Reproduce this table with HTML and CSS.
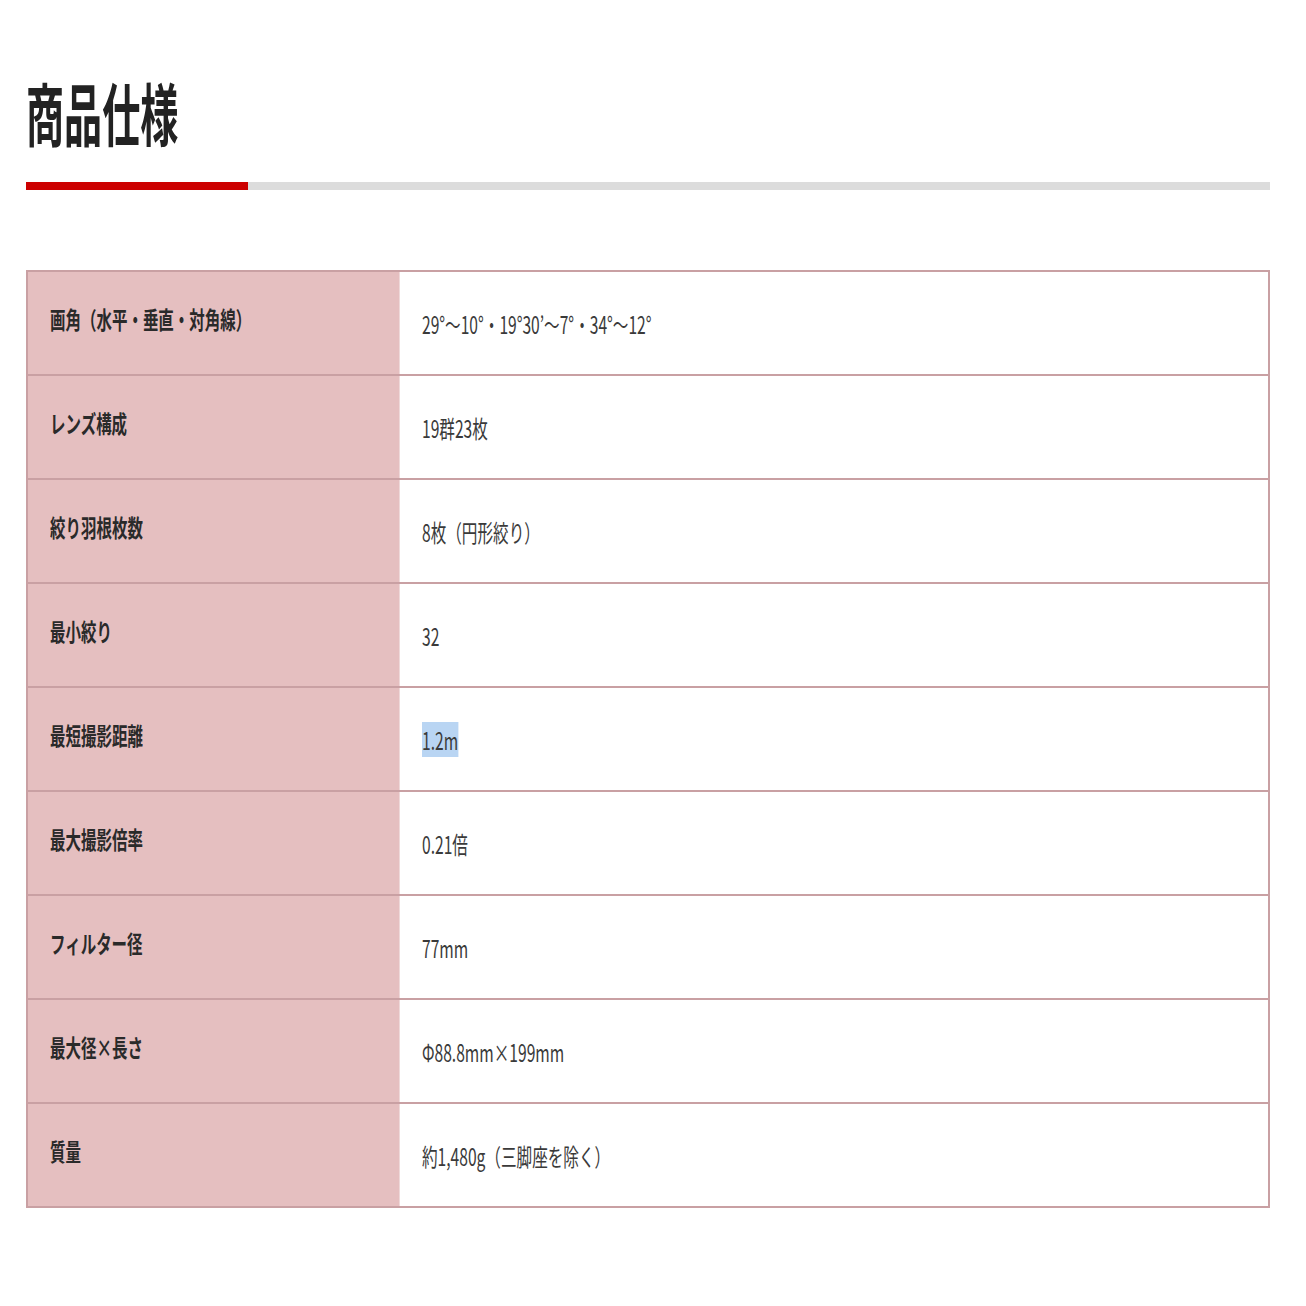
FILE: index.html
```html
<!DOCTYPE html>
<html lang="ja">
<head>
<meta charset="utf-8">
<title>商品仕様</title>
<link rel="stylesheet" href="styles.css">
</head>
<body>
<main class="page">
  <h1 class="title"><span class="sq">商品仕様</span></h1>
  <div class="bar"><div class="bar-accent"></div></div>
  <table class="spec">
    <tbody>
      <tr><th><span class="sq">画角（水平・垂直・対角線）</span></th><td><span class="sq">29°〜10°・19°30’〜7°・34°〜12°</span></td></tr>
      <tr><th><span class="sq">レンズ構成</span></th><td><span class="sq">19群23枚</span></td></tr>
      <tr><th><span class="sq">絞り羽根枚数</span></th><td><span class="sq">8枚（円形絞り）</span></td></tr>
      <tr><th><span class="sq">最小絞り</span></th><td><span class="sq">32</span></td></tr>
      <tr><th><span class="sq">最短撮影距離</span></th><td><span class="sq"><span class="sel">1.2m</span></span></td></tr>
      <tr><th><span class="sq">最大撮影倍率</span></th><td><span class="sq">0.21倍</span></td></tr>
      <tr><th><span class="sq">フィルター径</span></th><td><span class="sq">77mm</span></td></tr>
      <tr><th><span class="sq">最大径×長さ</span></th><td><span class="sq">Φ88.8mm×199mm</span></td></tr>
      <tr><th><span class="sq">質量</span></th><td><span class="sq">約1,480g（三脚座を除く）</span></td></tr>
    </tbody>
  </table>
</main>
</body>
</html>
```

FILE: styles.css
```css
html, body {
  margin: 0;
  padding: 0;
  background: #ffffff;
}
body {
  font-family: "Noto Sans CJK JP", "Noto Sans", sans-serif;
  color: #333333;
}
.page {
  padding: 74px 36px 120px 26px;
}
.sq {
  display: inline-block;
  transform-origin: left center;
  white-space: nowrap;
}
.title {
  margin: 0;
  font-size: 68px;
  line-height: 76px;
  font-weight: 700;
  color: #222222;
}
.title .sq {
  transform: scaleX(0.56);
}
.bar {
  margin-top: 32px;
  height: 8px;
  background: #dcdcdc;
  display: flex;
}
.bar-accent {
  width: 222px;
  background: #cc0000;
}
.spec {
  margin-top: 80px;
  width: 100%;
  border-collapse: collapse;
  border: 2px solid #c9a0a3;
}
.spec tr {
  height: 104px;
  border-bottom: 2px solid #c9a0a3;
}
.spec th {
  width: 30%;
  background: #e5bfc0;
  text-align: left;
  font-weight: 700;
  font-size: 24px;
  color: #2a2a2a;
  padding: 0 0 10px 22px;
  border-right: 1px solid #efd9da;
  vertical-align: middle;
}
.spec th .sq {
  transform: scaleX(0.645);
}
.spec td {
  font-size: 24px;
  color: #3a3a3a;
  padding: 0 0 0 22px;
  vertical-align: middle;
}
.spec td .sq {
  transform: scaleX(0.65);
}
.sel {
  background: #b9d5f3;
}
```
